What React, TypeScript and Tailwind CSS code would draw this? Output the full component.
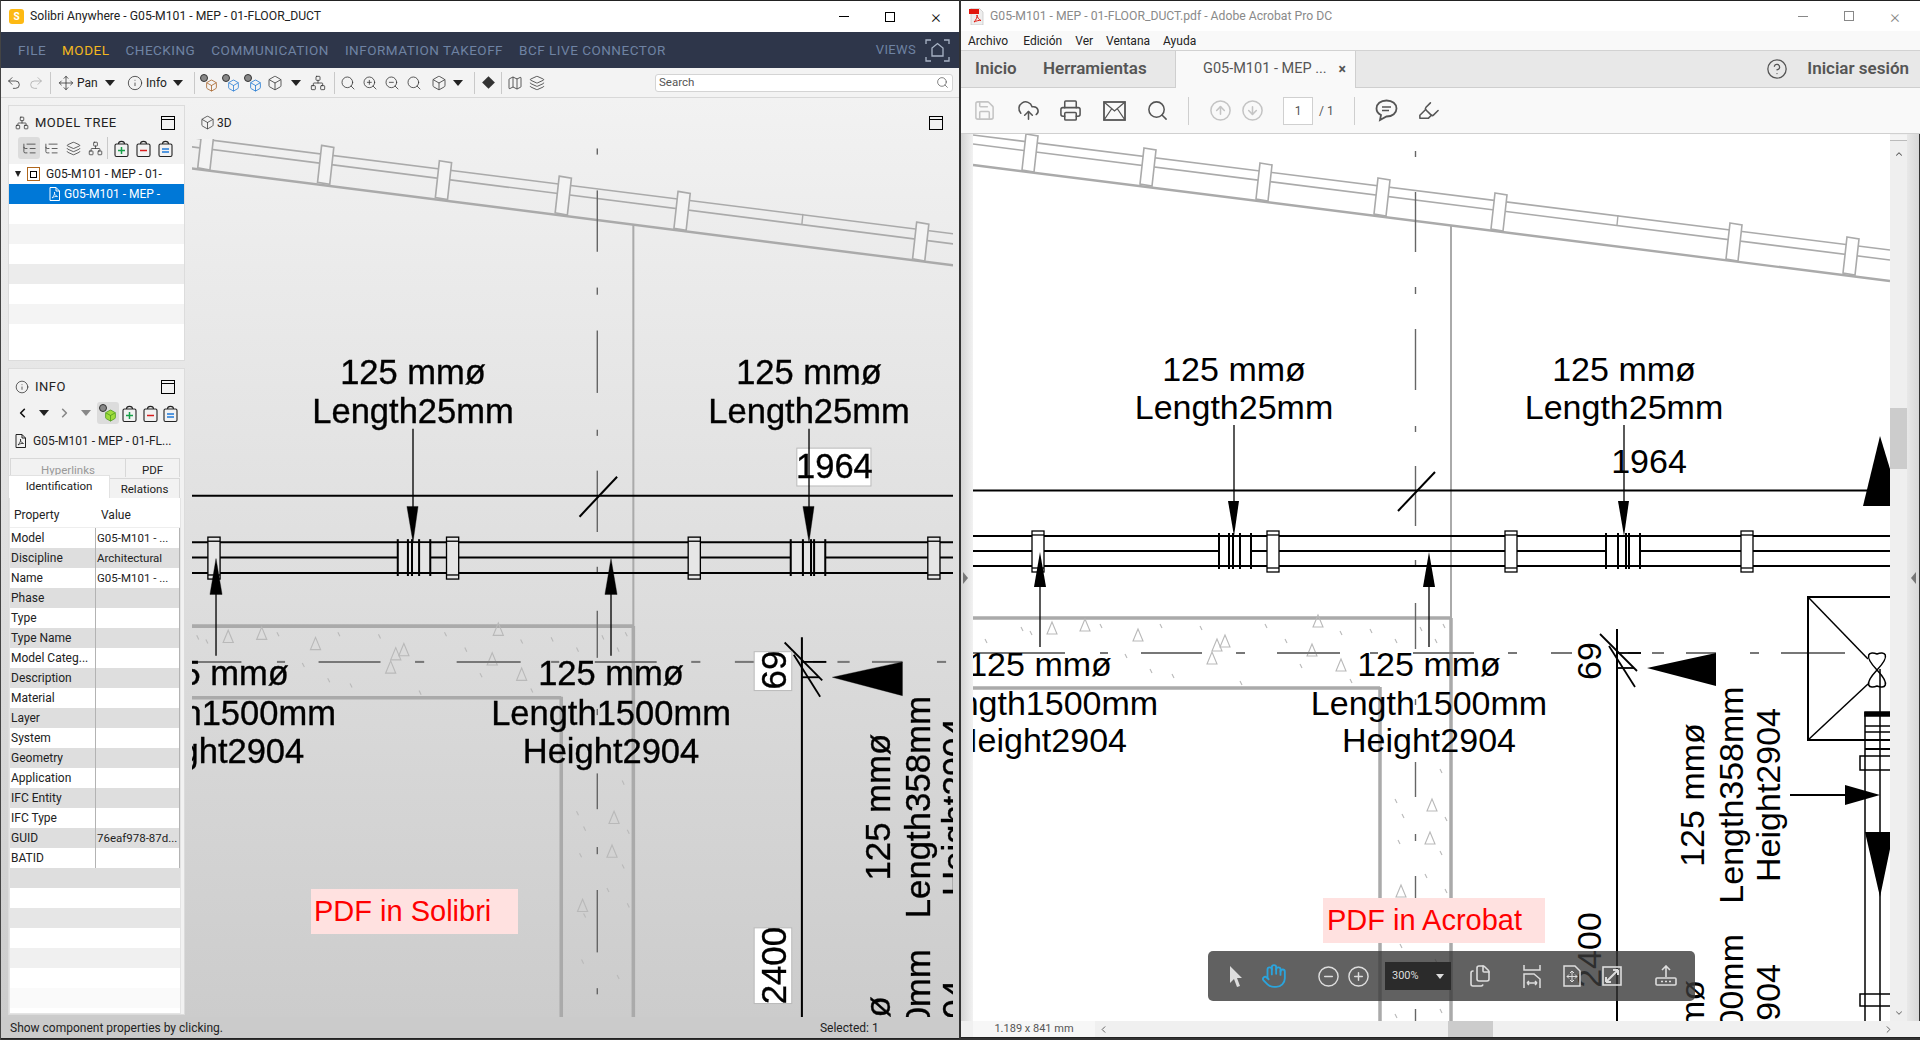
import {
  Box,
  ChevronDown,
  ChevronLeft,
  ChevronRight,
  ChevronUp,
  CircleArrowDown,
  CircleArrowUp,
  CircleHelp,
  CircleMinus,
  CirclePlus,
  CloudUpload,
  Files,
  Hand,
  Highlighter,
  Info,
  Layers,
  ListTree,
  Map,
  Move,
  Network,
  Printer,
  Redo2,
  Save,
  Search,
  Undo2,
  ZoomIn,
  ZoomOut,
} from "lucide-react";

const NAV = ["FILE", "MODEL", "CHECKING", "COMMUNICATION", "INFORMATION TAKEOFF", "BCF LIVE CONNECTOR"];

const PROPS = [
  ["Model", "G05-M101 - ..."],
  ["Discipline", "Architectural"],
  ["Name", "G05-M101 - ..."],
  ["Phase", ""],
  ["Type", ""],
  ["Type Name", ""],
  ["Model Categ...", ""],
  ["Description", ""],
  ["Material", ""],
  ["Layer", ""],
  ["System", ""],
  ["Geometry", ""],
  ["Application", ""],
  ["IFC Entity", ""],
  ["IFC Type", ""],
  ["GUID", "76eaf978-87d..."],
  ["BATID", ""],
];

const EMPTY_ROWS = ["bg-[#dedede]", "bg-white", "bg-[#e6e6e6]", "bg-white", "bg-[#f0f0f0]", "bg-white", "bg-[#fafafa]"];
const TREE_ROWS = ["bg-white", "bg-[#f4f4f4]", "bg-white", "bg-[#ececec]", "bg-white", "bg-[#f4f4f4]", "bg-white", "bg-white"];

// fence posts, page coordinates of the acrobat pane
const POSTS = [[1032, 135], [1150, 149], [1266, 164], [1384, 179], [1501, 194], [1736, 224], [1853, 238]];
const FLANGES = [1032, 1267, 1505, 1741];
const CENTER_DASHES = [[152, 158], [193, 253], [288, 295], [330, 391], [427, 433], [467, 527], [561, 568], [604, 650], [700, 706], [763, 798], [835, 842], [877, 938], [973, 979], [1010, 1022]];
const AXIS_DASHES = [[973, 1065], [1100, 1108], [1141, 1202], [1236, 1245], [1277, 1340], [1370, 1378], [1413, 1474], [1508, 1517], [1551, 1572], [1628, 1641], [1652, 1664], [1686, 1716], [1750, 1759], [1781, 1845]];
const SPECK_TRIANGLES = [[1052, 630], [1085, 627], [1138, 637], [1217, 647], [1225, 643], [1212, 660], [1341, 667], [1312, 652], [1318, 623], [1432, 807], [1430, 840], [1401, 893]];
const SPECK_TICKS = [[1021, 628], [1030, 632], [985, 640], [1100, 625], [1160, 625], [1125, 655], [1150, 670], [1200, 627], [1265, 625], [1285, 640], [1300, 665], [1340, 632], [1370, 630], [1395, 640], [1420, 628], [1435, 640], [1443, 625], [1350, 680], [1240, 682], [1172, 675], [1440, 770], [1395, 800], [1402, 815], [1445, 818], [1398, 841], [1440, 852], [1402, 900], [1425, 875], [1445, 890], [1400, 945], [1435, 960], [1395, 1015], [1440, 1010]];

function Plan({ boxed }: { boxed: boolean }) {
  const box = boxed ? "white" : "none";
  const boxLine = boxed ? "#bbbbbb" : "none";
  const inner = boxed ? "#e6e6e6" : "white";
  return (
    <g fontFamily="'Liberation Sans', Arial, sans-serif" fontSize="34" fill="#000" stroke={boxed ? "#000" : "none"} strokeWidth={boxed ? 0.35 : 0}>
      {/* fence */}
      <g stroke="#aaaaaa" fill="none">
        <line x1="973" y1="136" x2="1890" y2="251" strokeWidth="1.6" />
        <line x1="973" y1="145" x2="1890" y2="261" strokeWidth="1.6" />
        <line x1="973" y1="166" x2="1890" y2="282" strokeWidth="2.4" />
        <line x1="1618" y1="216" x2="1617" y2="226" strokeWidth="1.4" />
        {POSTS.map(([x, y]) => (
          <polygon key={x} points={`${x - 6},${y} ${x + 6},${y + 2} ${x + 2},${y + 38} ${x - 10},${y + 36}`} fill={boxed ? "#f3f3f3" : "white"} strokeWidth="1.6" />
        ))}
      </g>

      {/* walls */}
      <g stroke="#aaaaaa" fill="none" strokeWidth="3.5">
        <line x1="973" y1="619" x2="1451" y2="619" />
        <line x1="973" y1="689" x2="1380" y2="689" />
        <line x1="1380" y1="688" x2="1380" y2="1022" />
        <line x1="1451" y1="619" x2="1451" y2="1022" />
        <line x1="1451" y1="226" x2="1451" y2="619" strokeWidth="2" />
      </g>

      {/* concrete hatch */}
      <g stroke="#b9b9b9" fill="none" strokeWidth="1.1">
        {SPECK_TRIANGLES.map(([x, y]) => (
          <polygon key={`${x}-${y}`} points={`${x},${y - 7} ${x + 5},${y + 5} ${x - 5},${y + 5}`} />
        ))}
        {SPECK_TICKS.map(([x, y]) => (
          <line key={`${x}-${y}`} x1={x} y1={y} x2={x + 2} y2={y + 4} />
        ))}
      </g>

      {/* axis lines */}
      <g stroke="#666" strokeWidth="1.4">
        {CENTER_DASHES.map(([a, b]) => (
          <line key={a} x1="1415.5" y1={a} x2="1415.5" y2={b} />
        ))}
      </g>
      <g stroke="#777" strokeWidth="2">
        {AXIS_DASHES.map(([a, b]) => (
          <line key={a} x1={a} y1="654" x2={b} y2="654" />
        ))}
      </g>

      {/* duct runs */}
      <g stroke="#000" strokeWidth="2">
        <line x1="973" y1="491.5" x2="1890" y2="491.5" />
        <line x1="973" y1="537" x2="1890" y2="537" />
        <line x1="973" y1="552" x2="1890" y2="552" />
        <line x1="973" y1="567" x2="1890" y2="567" />
        <line x1="1398" y1="512" x2="1435" y2="473" />
      </g>
      <g stroke="#000" strokeWidth="1.3" fill={inner}>
        {FLANGES.map((x) => (
          <g key={x}>
            <rect x={x} y="532" width="12" height="41" />
            <line x1={x} y1="536" x2={x + 12} y2="536" />
            <line x1={x} y1="569" x2={x + 12} y2="569" />
          </g>
        ))}
        <rect x="1219" y="538" width="32" height="28" stroke="none" />
        <rect x="1606" y="538" width="34" height="28" stroke="none" />
        {[1219, 1229, 1233, 1240, 1251, 1606, 1618, 1626, 1629, 1640].map((x) => (
          <line key={x} x1={x} y1="534" x2={x} y2="570" strokeWidth="2" />
        ))}
      </g>

      {/* 1964 tag sits under its leader */}
      <rect x="1612" y="445" width="73" height="37" fill={box} stroke={boxLine} strokeWidth="1" />

      {/* leaders */}
      <g stroke="#000" strokeWidth="1.3">
        <line x1="1234" y1="426" x2="1234" y2="505" />
        <line x1="1624" y1="426" x2="1624" y2="505" />
        <line x1="1040" y1="585" x2="1040" y2="648" />
        <line x1="1429" y1="585" x2="1429" y2="648" />
        <line x1="1617" y1="630" x2="1617" y2="1022" strokeWidth="2" />
        <line x1="1600" y1="635" x2="1637" y2="672" strokeWidth="1.8" />
        <line x1="1609" y1="647" x2="1635" y2="688" strokeWidth="1.8" />
        <line x1="1617" y1="654" x2="1641" y2="654" strokeWidth="1.8" />
        <line x1="1617" y1="669" x2="1634" y2="669" strokeWidth="1.8" />
        <line x1="1790" y1="796" x2="1846" y2="796" strokeWidth="2" />
      </g>
      <polygon points="1234,537 1228,502 1239,502" />
      <polygon points="1624,537 1618,502 1629,502" />
      <polygon points="1040,553 1034,588 1046,588" />
      <polygon points="1429,553 1423,588 1435,588" />
      <polygon points="1647,669 1716,654 1716,687" />
      <polygon points="1880,437 1863,507 1890,507 1890,470" />
      <polygon points="1880,796 1845,786 1845,806" />
      <polygon points="1865,833 1890,833 1890,850 1880,898" />

      {/* equipment on the far right */}
      <g stroke="#000" fill="none" strokeWidth="1.5">
        <rect x="1808" y="598" width="120" height="143" strokeWidth="2" />
        <line x1="1808" y1="598" x2="1868" y2="660" />
        <line x1="1808" y1="741" x2="1868" y2="685" />
        <path d="M1877 671 C1862 655 1870 652 1877 655 C1884 652 1892 655 1877 671 C1862 687 1870 690 1877 687 C1884 690 1892 687 1877 671" />
        <line x1="1865" y1="713" x2="1865" y2="1022" />
        <line x1="1880" y1="670" x2="1880" y2="1022" />
        <rect x="1865" y="713" width="30" height="4" fill="#000" />
        <line x1="1865" y1="727" x2="1895" y2="727" />
        <line x1="1865" y1="733" x2="1895" y2="733" />
        <line x1="1865" y1="741" x2="1895" y2="741" strokeWidth="2" />
        <line x1="1865" y1="750" x2="1895" y2="750" strokeWidth="2" />
        <rect x="1860" y="757" width="40" height="14" />
        <rect x="1860" y="995" width="40" height="12" />
      </g>

      {/* dimension labels */}
      <text x="1649" y="474" textAnchor="middle">1964</text>
      <rect x="1570" y="644" width="37" height="38" fill={box} stroke={boxLine} strokeWidth="1" />
      <text transform="translate(1601 662) rotate(-90)" textAnchor="middle">69</text>
      <rect x="1570" y="914" width="37" height="74" fill={box} stroke={boxLine} strokeWidth="1" />
      <text transform="translate(1601 951) rotate(-90)" textAnchor="middle">2400</text>

      {/* tags */}
      <g textAnchor="middle">
        <text x="1234" y="382">125 mmø</text>
        <text x="1234" y="420">Length25mm</text>
        <text x="1624" y="382">125 mmø</text>
        <text x="1624" y="420">Length25mm</text>
        <text x="1040" y="677">125 mmø</text>
        <text x="1040" y="716">Length1500mm</text>
        <text x="1040" y="753">Height2904</text>
        <text x="1429" y="677">125 mmø</text>
        <text x="1429" y="716">Length1500mm</text>
        <text x="1429" y="753">Height2904</text>
        <text transform="translate(1704 796) rotate(-90)">125 mmø</text>
        <text transform="translate(1743 796) rotate(-90)">Length358mm</text>
        <text transform="translate(1780 796) rotate(-90)">Height2904</text>
      </g>
      <g textAnchor="end">
        <text transform="translate(1704 981) rotate(-90)">125 mmø</text>
        <text transform="translate(1743 935) rotate(-90)">Length1500mm</text>
        <text transform="translate(1780 965) rotate(-90)">Height2904</text>
      </g>
    </g>
  );
}

function PanelToggle({ className = "" }: { className?: string }) {
  return (
    <span className={`block h-[14px] w-[14px] border border-black ${className}`}>
      <span className="block h-[3px] border-b border-black" />
    </span>
  );
}

function Caret({ color = "border-t-[#222]" }: { color?: string }) {
  return <span className={`block h-0 w-0 border-x-[5px] border-t-[6px] border-x-transparent ${color}`} />;
}

function Cell({ children, className = "" }: { children?: React.ReactNode; className?: string }) {
  return <span className={`flex h-[22px] w-[22px] shrink-0 items-center justify-center ${className}`}>{children}</span>;
}

function Sep({ className = "" }: { className?: string }) {
  return <span className={`block h-[22px] w-px shrink-0 bg-[#c9c9c9] ${className}`} />;
}

function Basket({ mark, color }: { mark: "+" | "-" | "="; color: string }) {
  return (
    <svg width="17" height="19" viewBox="0 0 17 19" fill="none" stroke="#222" strokeWidth="1.1">
      <path d="M5.5 5 C5.5 1.5 11.5 1.5 11.5 5" />
      <rect x="2" y="5" width="13" height="12.5" rx="1.5" />
      <g stroke={color} strokeWidth="1.5">
        {mark === "=" ? (
          <>
            <line x1="5" y1="10" x2="12" y2="10" />
            <line x1="5" y1="13" x2="12" y2="13" />
          </>
        ) : (
          <line x1="5" y1="11.5" x2="12" y2="11.5" />
        )}
        {mark === "+" && <line x1="8.5" y1="8" x2="8.5" y2="15" />}
      </g>
    </svg>
  );
}

function PdfDoc({ light = false }: { light?: boolean }) {
  const c = light ? "#fff" : "#222";
  return (
    <svg width="11" height="14" viewBox="0 0 11 14" fill="none" stroke={c} strokeWidth="1">
      <path d="M1 .5 H7 L10.5 4 V13.5 H1 Z M7 .5 V4 H10.5" />
      <path d="M3 11 C5 9 6 6.5 5.5 5 C5 6.5 6.5 9 8.5 9.5 C6.5 9 4.5 10 3 11 Z" strokeWidth=".8" />
    </svg>
  );
}

function PaleCube({ color, fill = "none" }: { color: string; fill?: string }) {
  return (
    <span className="relative block h-[18px] w-[18px]">
      <span className="absolute left-0 top-0 h-[8px] w-[8px] rounded-full border border-[#333] bg-[#888]" />
      <Box size={13} strokeWidth={1.5} color={color} fill={fill} className="absolute bottom-0 right-0" />
    </span>
  );
}

function SolibriWindow() {
  const ic = { size: 16, strokeWidth: 1.2, color: "#333" };
  return (
    <div className="flex h-full w-[959px] shrink-0 flex-col border-l border-[#444] border-t border-t-[#222]">
      <div className="flex h-[31px] shrink-0 items-center bg-white pl-[8px]">
        <span className="flex h-[15px] w-[15px] items-center justify-center rounded-[3px] bg-[#fdb913] text-[10px] font-bold text-white">S</span>
        <span className="ml-[6px] text-[12.2px] text-[#222]">Solibri Anywhere - G05-M101 - MEP - 01-FLOOR_DUCT</span>
        <div className="ml-auto flex text-[#111]">
          <span className="flex h-[31px] w-[46px] items-center justify-center"><span className="h-px w-[10px] bg-black" /></span>
          <span className="flex h-[31px] w-[46px] items-center justify-center"><span className="h-[10px] w-[10px] border border-black" /></span>
          <span className="flex h-[31px] w-[46px] items-center justify-center text-[19px] font-light leading-none">×</span>
        </div>
      </div>

      <div className="flex h-[36px] shrink-0 items-center bg-[#2e364a] pl-[17px] pr-[9px] text-[13.5px] tracking-[0.5px] text-[#6f83a3]">
        {NAV.map((n) => (
          <span key={n} className={`mr-[16px] ${n === "MODEL" ? "text-[#f2b71f]" : ""}`}>{n}</span>
        ))}
        <span className="ml-auto text-[13px] tracking-[0.35px]">VIEWS</span>
        <svg className="ml-[9px]" width="25" height="25" viewBox="0 0 25 25" fill="none" stroke="#a9b4c6" strokeWidth="1.3">
          <path d="M1 6 V2 H6 M19 2 H24 V6 M24 19 V23 H19 M6 23 H1 V19" />
          <path d="M7 18 V10 L12.5 5.5 L18 10 V18 Z" />
        </svg>
      </div>

      <div className="flex h-[30px] shrink-0 items-center border-b border-[#d8d8d8] bg-[#f3f3f3] pl-[2px] pr-[6px] text-[12px] text-[#222]">
        <Cell><Undo2 {...ic} /></Cell>
        <Cell><Redo2 {...ic} color="#aaa" /></Cell>
        <Sep className="ml-[3px]" />
        <Cell className="ml-[4px]"><Move {...ic} /></Cell>
        <span className="w-[22px]">Pan</span>
        <span className="ml-[6px]"><Caret /></span>
        <Cell className="ml-[9px]"><Info {...ic} /></Cell>
        <span className="w-[22px]">Info</span>
        <span className="ml-[5px]"><Caret /></span>
        <Sep className="ml-[11px]" />
        <Cell className="ml-[3px]"><PaleCube color="#a8642a" /></Cell>
        <Cell><PaleCube color="#2b7fd6" /></Cell>
        <Cell><PaleCube color="#1f78d1" /></Cell>
        <Cell><Box {...ic} /></Cell>
        <span className="ml-[5px]"><Caret /></span>
        <Cell className="ml-[6px]"><Network {...ic} /></Cell>
        <Sep className="ml-[5px]" />
        <Cell className="ml-[2px]"><Search {...ic} /></Cell>
        <Cell><ZoomIn {...ic} /></Cell>
        <Cell><ZoomOut {...ic} /></Cell>
        <Cell><Search {...ic} /></Cell>
        <Cell className="ml-[3px]"><Box {...ic} /></Cell>
        <span className="ml-[3px]"><Caret /></span>
        <Sep className="ml-[11px]" />
        <Cell className="ml-[2px]">
          <span className="block h-[9px] w-[9px] rotate-45 bg-[#333]" />
        </Cell>
        <Sep className="ml-[2px]" />
        <Cell className="ml-[2px]"><Map {...ic} /></Cell>
        <Cell><Layers {...ic} /></Cell>
        <div className="ml-auto flex h-[18px] w-[298px] items-center justify-between rounded-[3px] border border-[#d4d4d4] bg-white pl-[3px] pr-[3px] text-[11.5px] text-[#555]">
          Search
          <Search size={13} strokeWidth={1.2} color="#444" />
        </div>
      </div>

      <div className="flex h-[919px] shrink-0 bg-gradient-to-b from-[#f2f2f2] to-[#cccccc]">
        <div className="ml-[7px] mt-[7px] flex w-[177px] shrink-0 flex-col gap-[7px] pb-[2px]">
          <section className="h-[256px] shrink-0 overflow-hidden border border-[#dcdcdc] bg-[#f2f2f2]">
            <div className="flex h-[30px] items-center pl-[6px] pr-[9px] pt-[4px] text-[13px] tracking-[0.5px] text-[#222]">
              <Network size={14} strokeWidth={1.2} color="#222" />
              <span className="ml-[6px]">MODEL TREE</span>
              <PanelToggle className="ml-auto" />
            </div>
            <div className="flex h-[28px] items-center pb-[4px] pl-[9px]">
              <Cell className="rounded-[3px] bg-[#dcdcdc]"><ListTree {...ic} size={15} /></Cell>
              <Cell><ListTree {...ic} size={15} /></Cell>
              <Cell><Layers {...ic} size={15} /></Cell>
              <Cell><Network {...ic} size={15} /></Cell>
              <Sep className="ml-[1px] mr-[2px]" />
              <Cell><Basket mark="+" color="#18a04a" /></Cell>
              <Cell><Basket mark="-" color="#d81e1e" /></Cell>
              <Cell><Basket mark="=" color="#1e78d8" /></Cell>
            </div>
            <div className="flex h-[20px] items-center bg-white pl-[6px] text-[12px] text-[#222]">
              <span className="block h-0 w-0 border-x-[3.5px] border-t-[6px] border-x-transparent border-t-[#222]" />
              <span className="ml-[6px] flex h-[14px] w-[13px] items-center justify-center border border-[#b0661c]">
                <span className="block h-[7px] w-[7px] border border-black" />
              </span>
              <span className="ml-[6px]">G05-M101 - MEP - 01-</span>
            </div>
            <div className="flex h-[20px] items-center bg-[#0078d7] pl-[40px] text-[12px] text-white">
              <PdfDoc light />
              <span className="ml-[4px]">G05-M101 - MEP -</span>
            </div>
            {TREE_ROWS.map((c, i) => (
              <div key={i} className={`h-[20px] ${c}`} />
            ))}
          </section>

          <section className="flex flex-1 flex-col overflow-hidden border border-[#dcdcdc] bg-[#f2f2f2] pr-[3px]">
            <div className="flex h-[33px] shrink-0 items-center pl-[6px] pr-[6px] pt-[3px] text-[13px] tracking-[0.5px] text-[#222]">
              <Info size={14} strokeWidth={1.2} color="#222" />
              <span className="ml-[6px]">INFO</span>
              <PanelToggle className="ml-auto" />
            </div>
            <div className="flex h-[22px] shrink-0 items-center pl-[6px]">
              <ChevronLeft size={16} strokeWidth={2.6} color="#111" />
              <span className="ml-[9px]"><Caret /></span>
              <ChevronRight size={16} strokeWidth={2.6} color="#888" className="ml-[8px]" />
              <span className="ml-[9px]"><Caret color="border-t-[#888]" /></span>
              <Cell className="ml-[6px] rounded-[3px] bg-[#dcdcdc]"><PaleCube color="#4d9a1d" fill="#9fdc3c" /></Cell>
              <Cell className="-ml-[1px]"><Basket mark="+" color="#18a04a" /></Cell>
              <Cell className="-ml-[1px]"><Basket mark="-" color="#d81e1e" /></Cell>
              <Cell className="-ml-[2px]"><Basket mark="=" color="#1e78d8" /></Cell>
            </div>
            <div className="flex h-[34px] shrink-0 items-center pl-[6px] text-[12px] text-[#222]">
              <PdfDoc />
              <span className="ml-[7px]">G05-M101 - MEP - 01-FL...</span>
            </div>

            <div className="relative h-[40px] shrink-0 pl-[1px]">
              <div className="flex h-[19px] text-[11.5px]">
                <span className="w-[116px] border border-b-0 border-[#d8d8d8] text-center leading-[22px] text-[#999]">Hyperlinks</span>
                <span className="w-[54px] border border-b-0 border-l-0 border-[#d8d8d8] text-center leading-[22px] text-[#222]">PDF</span>
              </div>
              <div className="flex h-[21px] items-end text-[11.5px] text-[#222]">
                <span className="z-10 -ml-[2px] -mt-[2px] h-[23px] w-[102px] border border-b-0 border-[#e2e2e2] bg-white text-center leading-[20px]">Identification</span>
                <span className="h-[20px] w-[70px] border border-b-0 border-l-0 border-[#d8d8d8] text-center leading-[20px]">Relations</span>
              </div>
            </div>

            <div className="flex-1 border border-t-0 border-[#e4e4e4] bg-white text-[12px] text-[#222]">
              <div className="flex h-[30px] items-center border-b border-[#eeeeee] pt-[5px] text-[12px]">
                <span className="w-[85px] pl-[4px]">Property</span>
                <span className="pl-[6px]">Value</span>
              </div>
              {PROPS.map(([k, v], i) => (
                <div key={k} className={`flex h-[20px] items-center leading-none ${i % 2 ? "bg-[#dedede]" : "bg-white"}`}>
                  <span className="h-full w-[85px] shrink-0 pl-[1px] leading-[20px]">{k}</span>
                  <span className="h-full flex-1 overflow-hidden whitespace-nowrap border-x border-[#b3b3b3] pl-[1px] text-[11.5px] leading-[20px]">{v}</span>
                </div>
              ))}
              {EMPTY_ROWS.map((c, i) => (
                <div key={i} className={`h-[20px] ${c}`} />
              ))}
            </div>
          </section>
        </div>

        <div className="relative ml-[7px] flex w-[761px] shrink-0 flex-col">
          <div className="flex h-[41px] shrink-0 items-center pl-[8px] pr-[10px] pt-[8px] text-[12px] text-[#222]">
            <Box size={15} strokeWidth={1.2} color="#333" />
            <span className="ml-[2px]">3D</span>
            <PanelToggle className="ml-auto" />
          </div>
          <svg width="761" height="878" viewBox="191 139 761 878" className="blur-[0.7px]">
            <g transform="translate(-841 -7) scale(1.0154 1.0228)">
              <Plan boxed />
            </g>
          </svg>
          <div className="absolute left-[119px] top-[791px] flex h-[45px] w-[207px] items-center bg-[#ffe1e0] pl-[3px] font-['Liberation_Sans',sans-serif] text-[29px] text-[#ff0000]">
            PDF in Solibri
          </div>
        </div>
      </div>

      <div className="flex h-[21px] shrink-0 items-center bg-[#cbcbcb] pl-[9px] text-[12px] text-[#222]">
        <span>Show component properties by clicking.</span>
        <span className="ml-[597px]">Selected: 1</span>
      </div>
      <div className="h-[1px] shrink-0 bg-[#222]" />
    </div>
  );
}

function FitWidth() {
  return (
    <svg width="18" height="24" viewBox="0 0 18 24" fill="none" stroke="#ddd" strokeWidth="1.5">
      <path d="M1 1 V6 H17 V1 M1 24 V10 H11 L17 15 V24 M4 19 H14 M4 19 l2 -2 M4 19 l2 2 M14 19 l-2 -2 M14 19 l-2 2" />
    </svg>
  );
}

function FitPage() {
  return (
    <svg width="18" height="22" viewBox="0 0 18 22" fill="none" stroke="#ddd" strokeWidth="1.5">
      <path d="M1 1 H12 L17 6 V21 H1 Z" />
      <path d="M9 6 V17 M4 11.5 H14 M9 6 l-2 2 M9 6 l2 2 M9 17 l-2 -2 M9 17 l2 -2 M4 11.5 l2 -2 M4 11.5 l2 2 M14 11.5 l-2 -2 M14 11.5 l-2 2" strokeWidth="1" />
    </svg>
  );
}

function FullView() {
  return (
    <svg width="20" height="20" viewBox="0 0 20 20" fill="none" stroke="#ddd" strokeWidth="1.6">
      <rect x="1" y="1" width="18" height="18" />
      <path d="M4 16 L16 4 M16 4 H11 M16 4 V9 M4 16 H9 M4 16 V11" strokeWidth="2" />
    </svg>
  );
}

function ShareTray() {
  return (
    <svg width="22" height="22" viewBox="0 0 22 22" fill="none" stroke="#ddd" strokeWidth="1.6">
      <path d="M11 12 V1 M7 5 L11 1 L15 5" />
      <rect x="1" y="13" width="20" height="7" rx="1" />
      <path d="M6 16.5 H16" strokeDasharray="2 2" />
    </svg>
  );
}

function MailCross() {
  return (
    <svg width="23" height="20" viewBox="0 0 23 20" fill="none" stroke="#555" strokeWidth="1.8">
      <rect x="1" y="1" width="21" height="18" />
      <path d="M1 1 L11.5 10 L22 1 M1 19 L8.5 8 M22 19 L14.5 8" strokeWidth="1.3" />
    </svg>
  );
}

function CommentBubble() {
  return (
    <svg width="23" height="23" viewBox="0 0 23 23" fill="none" stroke="#555" strokeWidth="1.8">
      <path d="M11.5 1.5 C17.5 1.5 21.5 5 21.5 9.5 C21.5 14 17.5 17.5 11.5 17.5 L5 21 L6 16 C3 14.5 1.5 12 1.5 9.5 C1.5 5 5.5 1.5 11.5 1.5 Z" />
      <path d="M7 8 H16 M7 11.5 H14" strokeWidth="1.3" />
    </svg>
  );
}

function AcrobatWindow() {
  const ic = { size: 23, strokeWidth: 1.6, color: "#555" };
  return (
    <div className="flex h-full w-[959px] shrink-0 flex-col border-t border-[#222]">
      <div className="flex h-[30px] shrink-0 items-center bg-white pl-[8px] pr-[2px]">
        <svg width="15" height="17" viewBox="0 0 15 17">
          <path d="M2 0 H10 L14 4 V17 H2 Z" fill="#eeeeee" stroke="#bbb" strokeWidth=".6" />
          <rect x="0" y="1" width="10" height="5" fill="#e1160c" />
          <path d="M5 14 C7 12 8.5 9 8 7 C8 9 10 12 12 12.5 C10 12 7 13 5 14 Z" fill="none" stroke="#e1160c" />
        </svg>
        <span className="ml-[6px] text-[12.2px] text-[#8a8a8a]">G05-M101 - MEP - 01-FLOOR_DUCT.pdf - Adobe Acrobat Pro DC</span>
        <div className="ml-auto flex">
          <span className="flex h-[30px] w-[46px] items-center justify-center"><span className="h-px w-[10px] bg-[#888]" /></span>
          <span className="flex h-[30px] w-[46px] items-center justify-center"><span className="h-[10px] w-[10px] border border-[#888]" /></span>
          <span className="flex h-[30px] w-[46px] items-center justify-center text-[19px] font-light leading-none text-[#888]">×</span>
        </div>
      </div>

      <div className="flex h-[20px] shrink-0 items-center border-b border-[#d2d2d2] bg-[#f9f9f9] pl-[7px] text-[12px] text-[#222]">
        <span>Archivo</span>
        <span className="ml-[15px]">Edición</span>
        <span className="ml-[13px]">Ver</span>
        <span className="ml-[13px]">Ventana</span>
        <span className="ml-[13px]">Ayuda</span>
      </div>

      <div className="flex h-[37px] shrink-0 items-center border-b border-[#cfcfcf] bg-[#e8e8e8] text-[17px] font-semibold text-[#555]">
        <span className="ml-[14px] w-[68px]">Inicio</span>
        <span className="w-[132px]">Herramientas</span>
        <div className="flex h-[37px] w-[181px] items-center border-x border-[#cfcfcf] bg-[#f9f9f9] pl-[27px] text-[14.5px] font-normal">
          G05-M101 - MEP ...
          <span className="ml-[12px] text-[14px] font-bold">×</span>
        </div>
        <CircleHelp size={22} strokeWidth={1.4} color="#555" className="ml-auto" />
        <span className="ml-[19px] mr-[11px]">Iniciar sesión</span>
      </div>

      <div className="flex h-[46px] shrink-0 items-center border-b border-[#d0d0d0] bg-[#f9f9f9] pl-[12px]">
        <Save {...ic} color="#c4c4c4" />
        <CloudUpload {...ic} className="ml-[21px]" />
        <Printer {...ic} className="ml-[19px]" />
        <span className="ml-[21px]"><MailCross /></span>
        <Search {...ic} className="ml-[20px]" />
        <span className="ml-[19px] block h-[28px] w-px bg-[#cfcfcf]" />
        <CircleArrowUp {...ic} color="#c4c4c4" className="ml-[20px]" />
        <CircleArrowDown {...ic} color="#c4c4c4" className="ml-[9px]" />
        <span className="ml-[19px] flex h-[28px] w-[30px] items-center justify-center border border-[#d0d0d0] bg-white text-[12px] text-[#555]">1</span>
        <span className="ml-[6px] text-[12px] text-[#555]">/ 1</span>
        <span className="ml-[20px] block h-[28px] w-px bg-[#cfcfcf]" />
        <span className="ml-[20px]"><CommentBubble /></span>
        <Highlighter {...ic} className="ml-[19px]" />
      </div>

      <div className="flex h-[887px] shrink-0">
        <div className="flex w-[12px] shrink-0 items-center bg-gradient-to-r from-[#d4d4d4] to-[#f2f2f2]">
          <span className="ml-[2px] block h-0 w-0 border-y-[6px] border-l-[5px] border-y-transparent border-l-[#777]" />
        </div>
        <div className="relative w-[917px] shrink-0">
          <svg width="917" height="887" viewBox="973 135 917 887" className="block bg-white">
            <Plan boxed={false} />
          </svg>
          <div className="absolute left-[350px] top-[764px] flex h-[45px] w-[222px] items-center bg-[#ffe1e0] pl-[4px] font-['Liberation_Sans',sans-serif] text-[29px] text-[#ff0000]">
            PDF in Acrobat
          </div>
          <div className="absolute left-[235px] top-[817px] flex h-[50px] w-[487px] items-center rounded-[5px] bg-[#3a3a3a]/80 pl-[21px]">
            <svg width="14" height="22" viewBox="0 0 14 22"><path d="M1 1 L13 13 H8 L11 21 L8 22 L5 14 L1 18 Z" fill="#ddd" /></svg>
            <Hand size={26} strokeWidth={1.7} color="#2ba4dc" className="ml-[18px]" />
            <CircleMinus size={23} strokeWidth={1.5} color="#ddd" className="ml-[30px]" />
            <CirclePlus size={23} strokeWidth={1.5} color="#ddd" className="ml-[7px]" />
            <div className="ml-[15px] flex h-[28px] w-[66px] items-center justify-between bg-[#2b2b2b] pl-[7px] pr-[7px] text-[11px] text-[#ddd]">
              300%
              <span className="block h-0 w-0 border-x-[4px] border-t-[5px] border-x-transparent border-t-[#ddd]" />
            </div>
            <Files size={24} strokeWidth={1.6} color="#ddd" className="ml-[17px]" />
            <span className="ml-[31px]"><FitWidth /></span>
            <span className="ml-[22px]"><FitPage /></span>
            <span className="ml-[21px]"><FullView /></span>
            <span className="ml-[33px]"><ShareTray /></span>
          </div>
        </div>
        <div className="flex w-[17px] shrink-0 flex-col items-center bg-[#efefef]">
          <span className="mt-[1px] block h-[6px] w-full border-b border-[#bbb] bg-[#f4f4f4]" />
          <ChevronUp size={10} strokeWidth={2.5} color="#555" className="mt-[8px]" />
          <span className="mt-[249px] block h-[61px] w-full bg-[#cccccc]" />
          <ChevronDown size={10} strokeWidth={2.5} color="#777" className="mt-auto mb-[3px]" />
        </div>
        <div className="flex w-[12px] shrink-0 items-center justify-end bg-gradient-to-r from-[#e8e8e8] to-[#d8d8d8]">
          <span className="mr-[3px] block h-0 w-0 border-y-[6px] border-r-[5px] border-y-transparent border-r-[#777]" />
        </div>
      </div>

      <div className="flex h-[16px] shrink-0 items-center bg-[#f0f0f0] pl-[12px]">
        <span className="flex h-full w-[122px] items-center justify-center bg-[#f7f7f7] text-[11px] text-[#555]">1.189 x 841 mm</span>
        <ChevronLeft size={11} strokeWidth={2} color="#555" className="ml-[3px]" />
        <span className="ml-[339px] block h-full w-[45px] bg-[#cccccc]" />
        <ChevronRight size={11} strokeWidth={2} color="#555" className="ml-[390px]" />
      </div>
      <div className="h-[1px] shrink-0 bg-[#222]" />
    </div>
  );
}

export default function App() {
  return (
    <div className="flex h-[1040px] w-[1920px] gap-[2px] overflow-hidden bg-[#333] font-['Roboto',sans-serif]">
      <SolibriWindow />
      <AcrobatWindow />
    </div>
  );
}
